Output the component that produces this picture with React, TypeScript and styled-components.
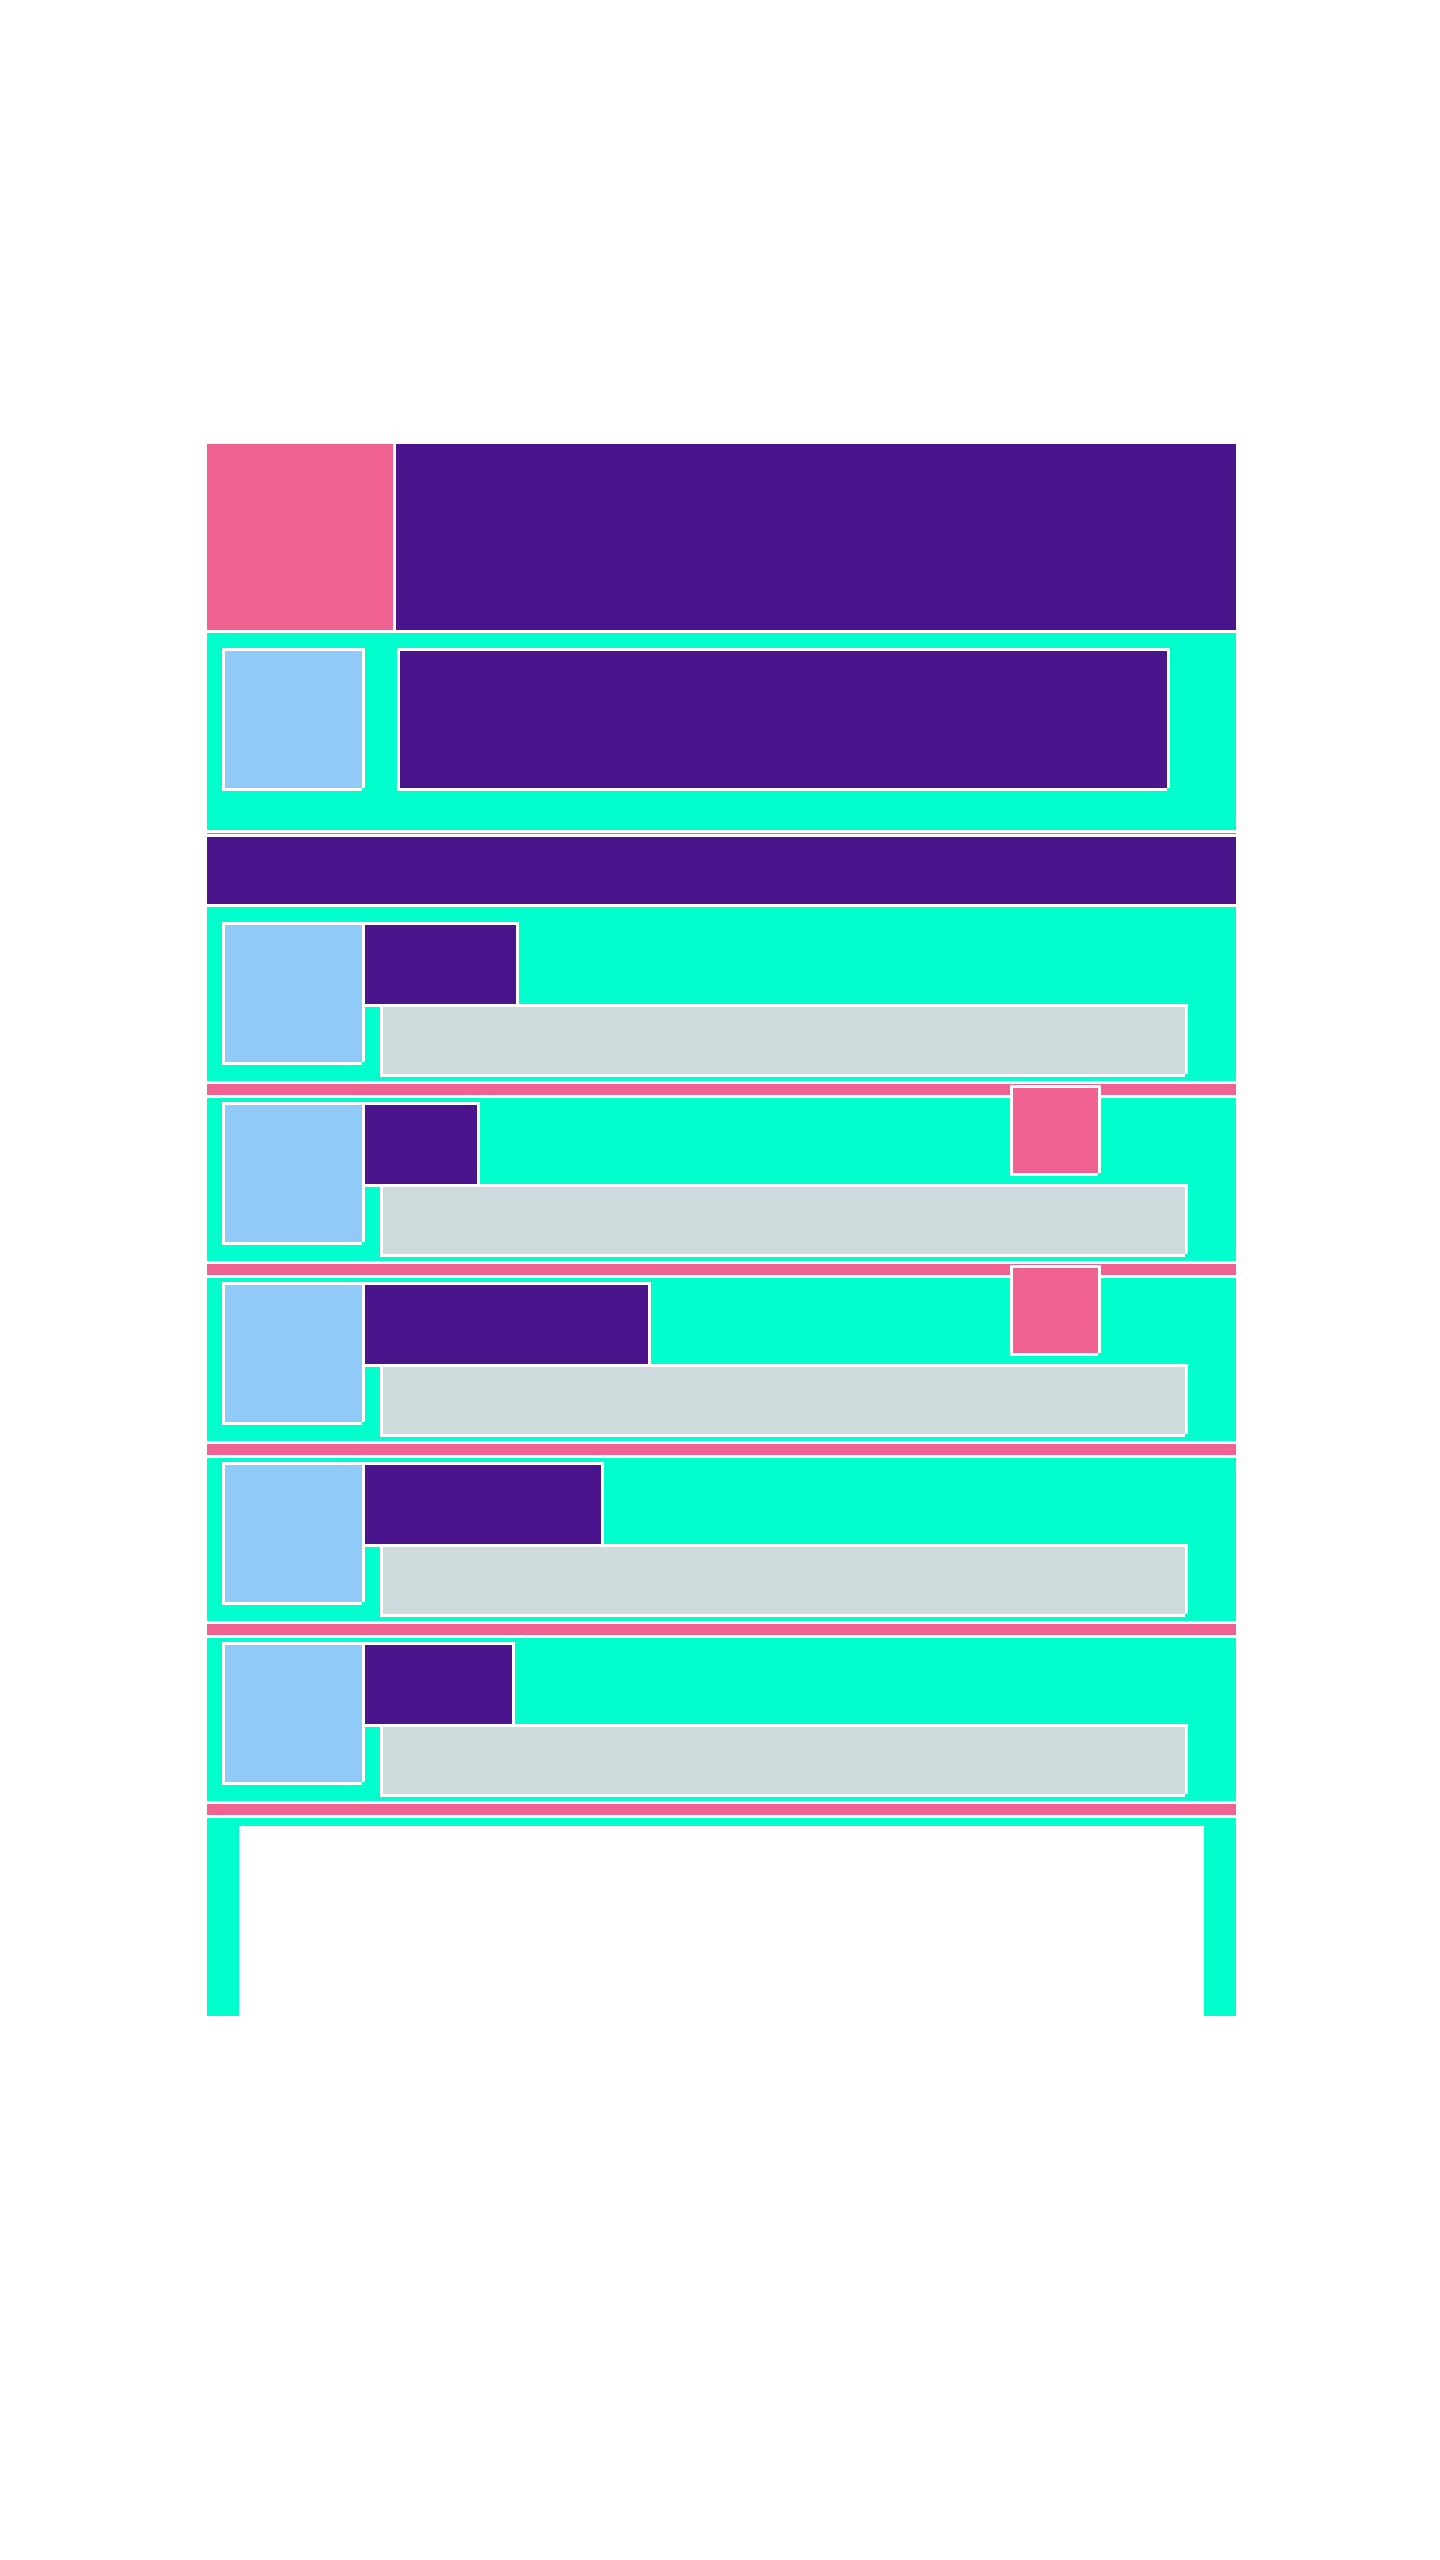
import React from "react";
import styled, { createGlobalStyle, css } from "styled-components";

const C = {
  pink: "#f06292",
  purple: "#4a148c",
  teal: "#00ffcc",
  blue: "#90caf9",
  gray: "#cddbdc",
  white: "#ffffff",
};

const Global = createGlobalStyle`
  html, body {
    margin: 0;
    padding: 0;
    background: ${C.white};
    font-family: "Liberation Sans", Arial, sans-serif;
  }
`;

/* white frame that leaves the bottom-right corner open, as in the reference */
const frame = css`
  box-shadow:
    -3px -3px 0 0 ${C.white},
    0 -3px 0 0 ${C.white},
    3px -3px 0 0 ${C.white},
    -3px 0 0 0 ${C.white},
    3px 0 0 0 ${C.white},
    -3px 3px 0 0 ${C.white},
    0 3px 0 0 ${C.white};
`;

const Page = styled.div`
  padding: 444px 0 0 207px;
  min-height: 2116px;
`;

const Stack = styled.div`
  width: 1029px;
  display: flex;
  flex-direction: column;
  gap: 3px;
`;

const Header = styled.header`
  display: flex;
  gap: 3px;
  height: 186px;
`;

const Logo = styled.div`
  width: 186px;
  flex: none;
  background: ${C.pink};
`;

const Banner = styled.div`
  flex: 1;
  background: ${C.purple};
`;

const Hero = styled.section`
  background: ${C.teal};
  height: 197px;
  box-sizing: border-box;
  padding: 18px 0 0 18px;
  display: flex;
  align-items: flex-start;
  gap: 38px;
`;

const Thumb = styled.div`
  width: 137px;
  height: 137px;
  flex: none;
  background: ${C.blue};
  ${frame}
`;

const HeroPanel = styled.div`
  width: 767px;
  height: 137px;
  background: ${C.purple};
  ${frame}
`;

const Rule = styled.hr`
  margin: 0;
  border: none;
  height: 1px;
  background: ${C.pink};
`;

const SectionBar = styled.div`
  height: 67px;
  background: ${C.purple};
`;

const Item = styled.article<{ $first?: boolean }>`
  position: relative;
  background: ${C.teal};
  box-sizing: border-box;
  padding: ${(p) => (p.$first ? "18px" : "7px")} 0 7px 18px;
  display: flex;
  align-items: flex-start;
  gap: 3px;
`;

const ItemBody = styled.div`
  display: flex;
  flex-direction: column;
  align-items: flex-start;
  gap: 3px;
`;

const Title = styled.div`
  height: 79px;
  background: ${C.purple};
  ${frame}
`;

const Text = styled.div`
  width: 802px;
  height: 67px;
  margin-left: 18px;
  background: ${C.gray};
  ${frame}
`;

const Badge = styled.div`
  position: absolute;
  top: -10px;
  left: 806px;
  width: 85px;
  height: 85px;
  background: ${C.pink};
  ${frame}
`;

const Divider = styled.div`
  height: 11px;
  background: ${C.pink};
`;

const Footer = styled.footer`
  background: ${C.teal};
  height: 198px;
  box-sizing: border-box;
  padding: 8px 32px 0;
  display: flex;
`;

const FooterCard = styled.div`
  flex: 1;
  background: ${C.white};
`;

const items = [
  { title: 151, badge: false },
  { title: 112, badge: true },
  { title: 283, badge: true },
  { title: 236, badge: false },
  { title: 147, badge: false },
];

export default function App() {
  return (
    <>
      <Global />
      <Page>
        <Stack>
          <Header>
            <Logo />
            <Banner />
          </Header>
          <Hero>
            <Thumb />
            <HeroPanel />
          </Hero>
          <Rule />
          <SectionBar />
          {items.map((it, i) => (
            <React.Fragment key={i}>
              <Item $first={i === 0}>
                <Thumb />
                <ItemBody>
                  <Title style={{ width: it.title }} />
                  <Text />
                </ItemBody>
                {it.badge && <Badge />}
              </Item>
              <Divider />
            </React.Fragment>
          ))}
          <Footer>
            <FooterCard />
          </Footer>
        </Stack>
      </Page>
    </>
  );
}
